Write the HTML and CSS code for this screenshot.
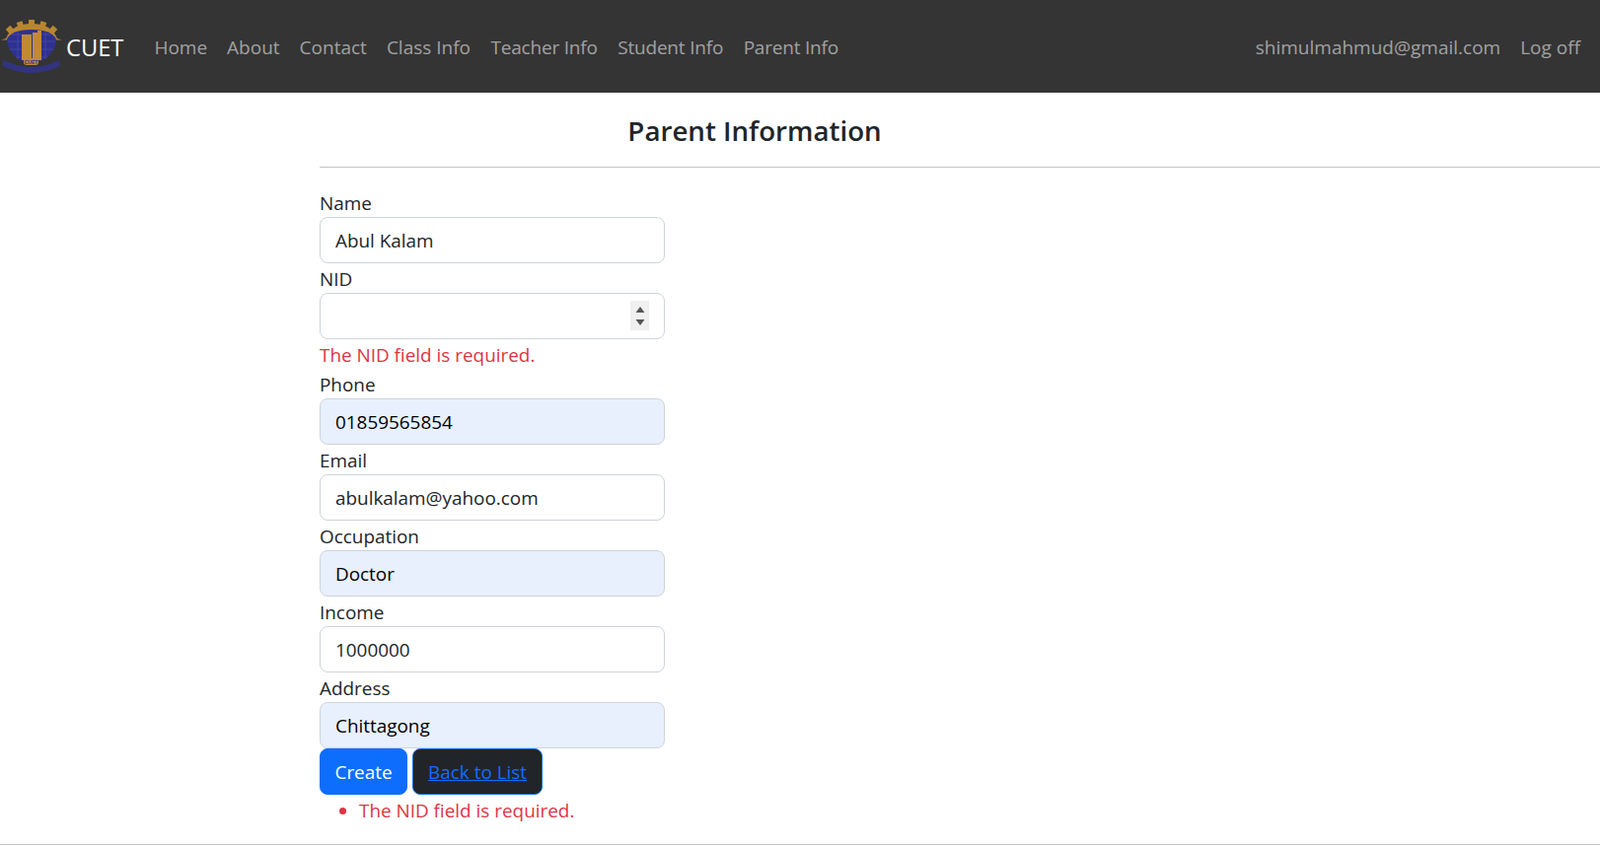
FILE: index.html
```html
<!DOCTYPE html>
<html lang="en">
<head>
    <meta charset="UTF-8">
    <meta name="viewport" content="width=device-width, initial-scale=1.0">
    <title>Parent Information</title>
    <link rel="stylesheet" href="styles.css">
</head>
<body>
    <nav class="navbar">
        <a class="brand" href="#">
            <svg class="brand-logo" width="64" height="58" viewBox="0 0 64 58">
                <path d="M1 22.5 L6 21 Q12 6 32 6 Q52 6 58 21 L63 22.5 Z" fill="#b8862f"/>
                <g fill="#b8862f">
                    <rect x="7" y="9" width="6" height="6" transform="rotate(-40 10 12)"/>
                    <rect x="17.5" y="4" width="6" height="6" transform="rotate(-18 20.5 7)"/>
                    <rect x="29" y="2" width="6" height="6"/>
                    <rect x="40.5" y="4" width="6" height="6" transform="rotate(18 43.5 7)"/>
                    <rect x="51" y="9" width="6" height="6" transform="rotate(40 54 12)"/>
                </g>
                <path d="M7 22 Q11 12 32 12 Q53 12 57 22 Q56 40 32 48 Q8 40 7 22 Z" fill="#2e3191"/>
                <path d="M12 17 H52 M8 24 H56 M10 32 H54 M16 40 H48 M18 14 V42 M46 14 V42" stroke="#4245a0" stroke-width="1" fill="none"/>
                <path d="M22 17 H32 V43 H22 Z M33 15 H38 V13 H42 V43 H33 Z" fill="#c08a35"/>
                <path d="M3 43 Q8 45 14 47 Q32 53 50 47 Q55 45 60 43 L61 49 Q46 56 32 56 Q17 56 3 49 Z" fill="#33347f"/>
                <rect x="24" y="41" width="15" height="7" rx="3" fill="#c08a35"/>
                <text class="logo-text" x="31.5" y="46.8" text-anchor="middle">CUET</text>
            </svg>
            <span>CUET</span>
        </a>
        <ul class="nav-list">
            <li><a href="#">Home</a></li>
            <li><a href="#">About</a></li>
            <li><a href="#">Contact</a></li>
            <li><a href="#">Class Info</a></li>
            <li class="nav-tight"><a href="#">Teacher Info</a></li>
            <li class="nav-tight"><a href="#">Student Info</a></li>
            <li class="nav-tight"><a href="#">Parent Info</a></li>
        </ul>
        <ul class="nav-list nav-right">
            <li><a href="#">shimulmahmud@gmail.com</a></li>
            <li><a href="#">Log off</a></li>
        </ul>
    </nav>

    <main class="content">
        <h3 class="page-title">Parent Information</h3>
        <hr class="title-rule">
        <form class="parent-form">
            <div class="form-group">
                <label for="name">Name</label>
                <input type="text" id="name" value="Abul Kalam">
            </div>
            <div class="form-group">
                <label for="nid">NID</label>
                <div class="number-wrap">
                    <input type="text" id="nid">
                    <span class="spinner">
                        <svg width="10" height="19" viewBox="0 0 10 19">
                            <path d="M5 0 L9.5 6 H0.5 Z M0.5 13 H9.5 L5 19 Z" fill="#555"/>
                        </svg>
                    </span>
                </div>
                <span class="field-error">The NID field is required.</span>
            </div>
            <div class="form-group">
                <label for="phone">Phone</label>
                <input class="autofilled" type="text" id="phone" value="01859565854">
            </div>
            <div class="form-group">
                <label for="email">Email</label>
                <input type="text" id="email" value="abulkalam@yahoo.com">
            </div>
            <div class="form-group">
                <label for="occupation">Occupation</label>
                <input class="autofilled" type="text" id="occupation" value="Doctor">
            </div>
            <div class="form-group">
                <label for="income">Income</label>
                <input type="text" id="income" value="1000000">
            </div>
            <div class="form-group">
                <label for="address">Address</label>
                <input class="autofilled" type="text" id="address" value="Chittagong">
            </div>
            <div class="actions">
                <button type="button" class="btn btn-primary">Create</button>
                <span class="btn btn-dark"><a href="#">Back to List</a></span>
            </div>
            <ul class="summary-errors">
                <li>The NID field is required.</li>
            </ul>
        </form>
    </main>
    <hr class="footer-rule">
</body>
</html>
```

FILE: styles.css
```css
* {
    box-sizing: border-box;
}

body {
    font-family: "Open Sans", "Noto Sans", sans-serif;
    font-size: 18.9px;
    line-height: 30px;
    color: #212529;
    background-color: #fff;
    margin: 0;
    height: 858px;
    overflow: hidden;
}

.navbar {
    display: flex;
    align-items: center;
    height: 94px;
    background-color: #343434;
    padding: 2px 20px 0 0;
    font-size: 19px;
}

.brand {
    display: flex;
    align-items: center;
    gap: 3px;
    color: #fff;
    text-decoration: none;
    font-size: 23.7px;
    margin-right: 21px;
}

.brand-logo {
    margin-top: -2px;
}

.logo-text {
    font-size: 5px;
    fill: #2e3191;
    font-family: "Liberation Sans", sans-serif;
    font-weight: bold;
}

.nav-list {
    display: flex;
    gap: 20px;
    list-style: none;
    margin: 0 0 0 10px;
    padding: 0;
}

.nav-list a {
    color: rgba(255, 255, 255, 0.55);
    text-decoration: none;
}

.nav-tight {
    letter-spacing: -0.2px;
    margin-left: 0.5px;
}

.nav-right {
    margin-left: auto;
}

.content {
    padding-left: 324px;
}

.page-title {
    width: 882px;
    margin: 0;
    padding-top: 20px;
    height: 75px;
    font-size: 27.7px;
    line-height: 36px;
    font-weight: 600;
    text-align: center;
}

.title-rule {
    margin: 0 0 21px;
    border: none;
    border-top: 1px solid #c4c4c4;
}

.parent-form {
    width: 350px;
}

label {
    display: block;
    height: 29px;
    line-height: 31px;
}

input {
    display: block;
    width: 100%;
    height: 47px;
    margin-bottom: 1px;
    padding: 7px 15px;
    font: inherit;
    color: #212529;
    background-color: #fff;
    border: 1px solid #ced4da;
    border-radius: 8px;
    outline: none;
}

.autofilled {
    background-color: #e8f0fe;
    color: #000;
}

.number-wrap {
    position: relative;
}

.spinner {
    position: absolute;
    top: 8px;
    right: 16px;
    width: 19px;
    height: 30px;
    display: flex;
    align-items: center;
    justify-content: center;
    background-color: #f0f0f0;
}

.field-error {
    display: block;
    color: #dc3545;
}

.actions {
    display: flex;
    gap: 5px;
    margin: -1px 0 1px;
}

.btn {
    display: block;
    height: 47px;
    padding: 7px 15px;
    font: inherit;
    border: 1px solid transparent;
    border-radius: 8px;
}

.btn-primary {
    padding: 7px 14.5px;
    color: #fff;
    background-color: #0d6efd;
    border-color: #0d6efd;
}

.btn-dark {
    padding-top: 8px;
    background-color: #212529;
    border-color: #0d6efd;
}

.btn-dark a {
    color: #0d6efd;
}

.summary-errors {
    margin: 0;
    padding-left: 40px;
    color: #dc3545;
}

.footer-rule {
    margin: 0;
    position: absolute;
    top: 856px;
    left: 0;
    right: 0;
    border: none;
    border-top: 1px solid #c4c4c4;
}
```
